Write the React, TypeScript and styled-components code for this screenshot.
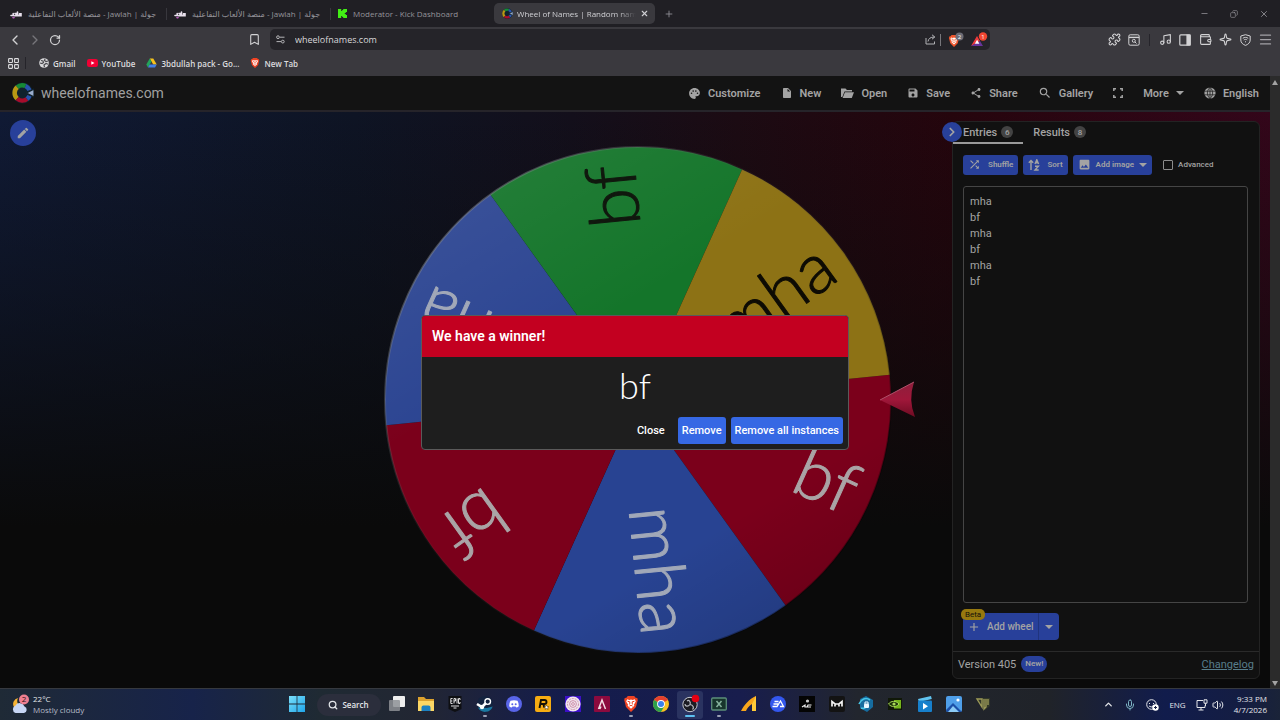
import React from "react";
import styled, { createGlobalStyle, css } from "styled-components";
import {
  Bookmark, ChevronLeft, ChevronRight, ChevronUp, RotateCw, Puzzle, Music, Wallet,
  Sparkle, Menu, X, Plus, Minus, Copy, Mic, Volume2, Search, LayoutGrid,
} from "lucide-react";
import {
  MdPalette, MdInsertDriveFile, MdSave, MdShare, MdSearch, MdEdit, MdShuffle, MdImage, MdAdd,
} from "react-icons/md";

const ui = `"Open Sans", "DejaVu Sans", sans-serif`;
const roboto = `Roboto, "Liberation Sans", sans-serif`;
const blue = "#28409a";
const dim = "#a3a3a3";

const GlobalStyle = createGlobalStyle`
  * { box-sizing: border-box; }
  body { margin: 0; background: #0a0a0a; overflow: hidden; }
  button, input, textarea { font: inherit; color: inherit; margin: 0; }
  button { border: 0; background: none; padding: 0; cursor: pointer; white-space: nowrap; }
  svg { display: block; flex: none; }
`;

const Desktop = styled.div`
  min-height: 100vh;
  display: flex;
  flex-direction: column;
  font-family: ${ui};
`;

/* ---------- browser chrome ---------- */

const TabStrip = styled.header`
  display: flex;
  align-items: center;
  height: 27px;
  padding-right: 8px;
  background: #201f24;
  color: #95949a;
  font-size: 8px;
`;

const Tab = styled.button<{ $active?: boolean }>`
  display: flex;
  align-items: center;
  gap: 6px;
  width: 164px;
  height: 21px;
  padding: 0 6px 0 10px;
  text-align: left;
  ${(p) =>
    p.$active
      ? css`
          width: 161px;
          margin: 0 4px 0 2px;
          padding-left: 8px;
          gap: 4px;
          border-radius: 5px;
          background: #3a393e;
          color: #d0d0d4;
        `
      : css`
          & + &::before { content: ""; width: 1px; height: 12px; margin-left: -8px; margin-right: 1px; background: #38373d; }
        `}
`;

const TabTitle = styled.span<{ $fade?: boolean }>`
  flex: 1;
  min-width: 0;
  white-space: nowrap;
  ${(p) => p.$fade && "mask-image: linear-gradient(90deg, #000 85%, transparent);"}
`;

const IconButton = styled.button`
  display: flex;
  align-items: center;
  justify-content: center;
  width: 20px;
  height: 20px;
`;

const WindowControls = styled.div`
  display: flex;
  gap: 10px;
  margin-left: auto;
  margin-right: -2px;
`;

const Toolbar = styled.div`
  display: flex;
  align-items: center;
  height: 25px;
  padding: 0 5px;
  background: #3a393e;
  color: #d2d2d4;
`;

const ToolGroup = styled.div`
  display: flex;
  align-items: center;
`;

const BookmarkSlot = styled.div`
  margin-left: 179px;
`;

const AddressBar = styled.form`
  display: flex;
  align-items: center;
  flex: 1;
  height: 21px;
  margin: 0 114px 0 6px;
  padding: 0 1px 0 6px;
  border-radius: 5px;
  background: #252429;
`;

const AddressInput = styled.input`
  flex: 1;
  min-width: 0;
  margin-left: 10px;
  padding: 0;
  border: 0;
  outline: 0;
  background: none;
  font-size: 9px;
  font-weight: 500;
  color: #d8d8da;
`;

const AddressBadges = styled.div`
  display: flex;
  gap: 4px;
`;

const Divider = styled.span<{ $light?: boolean }>`
  width: 1px;
  height: 12px;
  margin: 0 ${(p) => (p.$light ? "4px" : "5px")};
  background: ${(p) => (p.$light ? "#77767b" : "#25242a")};
`;

const Bookmarks = styled.nav`
  display: flex;
  align-items: center;
  height: 24px;
  padding: 0 7px 2px;
  background: #3a393e;
  color: #dcdcde;
  font-size: 8px;
  font-weight: 600;
`;

const BookmarkLinks = styled.div`
  display: flex;
  gap: 11px;
  margin-left: 8px;
`;

const BookmarkLink = styled.a`
  display: flex;
  align-items: center;
  gap: 4px;
  color: inherit;
  text-decoration: none;
  white-space: nowrap;
`;

/* ---------- web page ---------- */

const Viewport = styled.div`
  position: relative;
  display: flex;
  flex: 1;
  font-family: ${roboto};
  color: ${dim};
`;

const Page = styled.div`
  display: flex;
  flex: 1;
  flex-direction: column;
  min-width: 0;
`;

const Scrollbar = styled.div`
  display: flex;
  flex-direction: column;
  justify-content: space-between;
  align-items: center;
  width: 10px;
  padding: 4px 0 2px;
  background: #2b2b2b;
`;

const SiteHeader = styled.div`
  display: flex;
  align-items: center;
  height: 34px;
  padding: 0 11px 0 12px;
  background: #131313;
`;

const Brand = styled.a`
  display: flex;
  align-items: center;
  gap: 7px;
  margin-right: auto;
  color: #a0a0a0;
  font-size: 14px;
  text-decoration: none;
`;

const SiteMenu = styled.nav`
  display: flex;
  align-items: center;
  gap: 20px;
`;

const MenuItem = styled.button`
  display: flex;
  align-items: center;
  gap: 7px;
  font-size: 11px;
  font-weight: 600;
`;

const Main = styled.main`
  display: grid;
  flex: 1;
  grid-template-columns: minmax(0, 1fr) minmax(0, 560px) minmax(318px, 1fr);
  align-items: center;
  border-top: 2px solid #26242a;
  background:
    linear-gradient(180deg, transparent 0%, rgba(10, 10, 10, 0.45) 35%, #0a0a0a 72%),
    linear-gradient(90deg, #101a35 0%, #0e1424 28%, #130f1b 45%, #1c0b13 58%, #25050d 75%, #33061a 100%);
`;

const EditButton = styled.button`
  display: flex;
  align-items: center;
  justify-content: center;
  align-self: start;
  width: 26px;
  height: 26px;
  margin: 8px 0 0 10px;
  border-radius: 50%;
  background: ${blue};
`;

const WheelSvg = styled.svg`
  width: 100%;
  height: auto;
  font-family: Lato, "Liberation Sans", sans-serif;
  font-size: 70px;
  font-weight: 300;
`;

const Panel = styled.aside`
  position: relative;
  display: flex;
  flex-direction: column;
  align-self: stretch;
  justify-self: end;
  width: 308px;
  margin: 9px 10px 9px 0;
  border: 1px solid #232323;
  border-radius: 6px;
  background: #111111;
`;

const CollapseButton = styled.button`
  position: absolute;
  top: 0;
  left: -11px;
  display: flex;
  align-items: center;
  justify-content: center;
  width: 20px;
  height: 20px;
  border-radius: 50%;
  background: ${blue};
`;

const PanelTabs = styled.div`
  display: flex;
  height: 22px;
`;

const PanelTab = styled.button<{ $active?: boolean }>`
  display: flex;
  align-items: center;
  gap: 4px;
  padding: 0 10px;
  border-bottom: 2px solid ${(p) => (p.$active ? "#9a9a9a" : "transparent")};
  font-size: 11px;
  font-weight: 500;
`;

const Count = styled.span`
  display: flex;
  align-items: center;
  justify-content: center;
  width: 12px;
  height: 12px;
  border-radius: 50%;
  background: #434343;
  font-size: 8px;
`;

const PanelBody = styled.div`
  display: flex;
  flex: 1;
  flex-direction: column;
  padding: 10px 11px 11px 10px;
`;

const EntryTools = styled.div`
  display: flex;
  align-items: center;
  gap: 5px;
  height: 21px;
  margin-bottom: 11px;
`;

const ToolButton = styled.button`
  display: flex;
  align-items: center;
  gap: 5px;
  height: 20px;
  padding: 0 5px;
  border-radius: 3px;
  background: ${blue};
  font-size: 8px;
  font-weight: 600;
`;

const ToolLabel = styled.span<{ $inset?: boolean }>`
  padding-left: ${(p) => (p.$inset ? "2px" : "0")};
`;

const CheckLabel = styled.label`
  display: flex;
  align-items: center;
  gap: 5px;
  margin-left: 6px;
  font-size: 8px;
  font-weight: 500;
`;

const Checkbox = styled.input`
  appearance: none;
  width: 10px;
  height: 10px;
  border: 1px solid #8c8c8c;
  border-radius: 1px;
`;

const Entries = styled.textarea`
  flex: 1;
  width: 100%;
  padding: 7px 6px;
  border: 1px solid #454545;
  border-radius: 3px;
  outline: 0;
  background: #111111;
  font-size: 11px;
  line-height: 16px;
  resize: none;
`;

const AddWheelRow = styled.div`
  position: relative;
  display: flex;
  align-self: flex-start;
  height: 27px;
  margin-top: 10px;
  border-radius: 4px;
  background: ${blue};
`;

const AddWheelButton = styled.button`
  display: flex;
  align-items: center;
  gap: 6px;
  padding: 0 4px;
  font-size: 10px;
  font-weight: 500;
`;

const AddWheelMore = styled.button`
  display: flex;
  align-items: center;
  justify-content: center;
  width: 21px;
  border-left: 1px solid #20347e;
`;

const BetaBadge = styled.span`
  position: absolute;
  top: -4px;
  left: -2px;
  padding: 0 4px;
  border-radius: 5px;
  background: #97790f;
  color: #16130a;
  font-size: 8px;
  line-height: 11px;
`;

const PanelFooter = styled.footer`
  display: flex;
  align-items: center;
  gap: 5px;
  height: 27px;
  padding: 0 5px 2px;
  border-top: 1px solid #2a2a2a;
  font-size: 11px;
`;

const NewPill = styled.span`
  padding: 0 4px;
  border-radius: 8px;
  background: ${blue};
  font-size: 8px;
  font-weight: 600;
  line-height: 16px;
`;

const Changelog = styled.a`
  margin-left: auto;
  color: #587d8b;
`;

/* ---------- winner dialog ---------- */

const DialogLayer = styled.div`
  position: absolute;
  inset: 1px 10px 0 0;
  display: flex;
  align-items: center;
  justify-content: center;
`;

const Dialog = styled.section`
  width: 428px;
  border: 1px solid #5a5a5a;
  border-radius: 4px;
  overflow: hidden;
  background: #1e1e1e;
  color: #fff;
`;

const DialogTitle = styled.h2`
  margin: 0;
  padding: 0 10px;
  background: #c30020;
  font-size: 14px;
  font-weight: 600;
  line-height: 41px;
`;

const Winner = styled.p`
  margin: 0;
  padding-bottom: 4px;
  font-family: Lato, "Liberation Sans", sans-serif;
  font-size: 36px;
  font-weight: 300;
  line-height: 56px;
  text-align: center;
`;

const DialogActions = styled.div`
  display: flex;
  justify-content: flex-end;
  gap: 5px;
  padding: 0 5px 5px;
`;

const DialogButton = styled.button<{ $plain?: boolean }>`
  height: 27px;
  padding: 0 ${(p) => (p.$plain ? "8px" : "4px")};
  border-radius: 3px;
  background: ${(p) => (p.$plain ? "transparent" : "#3668e4")};
  font-size: 11px;
  font-weight: 500;
`;

/* ---------- taskbar ---------- */

const Taskbar = styled.footer`
  display: grid;
  grid-template-columns: 1fr auto 1fr;
  align-items: center;
  height: 32px;
  padding: 0 8px;
  border-top: 1px solid #36393f;
  background: linear-gradient(90deg, #1f2a36 0%, #17234a 15%, #1f2a33 25%, #222633 33%, #141c4c 44%, #181d4d 58%, #22262e 67%, #202329 82%, #111c4c 91%, #141d42 97%, #1a2338 100%);
  color: #e4e6ea;
  font-size: 8px;
`;

const Weather = styled.button`
  display: flex;
  align-items: center;
  gap: 4px;
  justify-self: start;
  padding: 0 0 2px 3px;
  line-height: 11px;
  text-align: left;
`;

const Muted = styled.span`
  color: #b4bac6;
`;

const TaskCenter = styled.div`
  display: flex;
  align-items: center;
`;

const SearchPill = styled.button`
  display: flex;
  align-items: center;
  justify-content: center;
  gap: 4px;
  width: 64px;
  height: 22px;
  margin: 0 3px 0 7px;
  border-radius: 11px;
  background: #2b2e3c;
  font-weight: 600;
`;

const TaskIcons = styled.div`
  display: flex;
  justify-content: space-between;
  width: 613px;
`;

const TaskButton = styled.button<{ $state?: "open" | "active" }>`
  display: flex;
  flex-direction: column;
  align-items: center;
  width: 26px;
  height: 28px;
  padding-top: 5px;
  border-radius: 3px;
  background: ${(p) => (p.$state === "active" ? "#2a3360" : "transparent")};
  &::after {
    content: "";
    width: ${(p) => (p.$state === "active" ? "10px" : "4px")};
    height: 2px;
    margin-top: 3px;
    border-radius: 1px;
    background: ${(p) => (p.$state === "active" ? "#5cc0f0" : p.$state ? "#9a9fb4" : "transparent")};
  }
`;

const Tray = styled.div`
  display: flex;
  align-items: center;
  justify-self: end;
  gap: 10px;
  padding-right: 5px;
`;

const TrayPair = styled.button`
  display: flex;
  gap: 4px;
`;

const Clock = styled.button`
  padding-bottom: 2px;
  line-height: 11px;
  text-align: right;
`;

/* ---------- drawings ---------- */

const WheelLogo = ({ size }: { size: number }) => (
  <svg width={size} height={size} viewBox="0 0 22 22" fill="none" strokeWidth="4.5">
    <circle cx="10.500" cy="11" r="10.500" fill="#10222d" />
    <path d="M5.200 5.200A7.600 7.600 0 0 1 13.500 4" stroke="#168a36" />
    <path d="M5.200 16.600A7.600 7.600 0 0 1 5.200 5.200" stroke="#b99713" />
    <path d="M15 17A7.600 7.600 0 0 1 5.200 16.600" stroke="#a80c2b" />
    <path d="M13.500 4A7.600 7.600 0 0 1 17.500 8.300M17.500 13.700A7.600 7.600 0 0 1 15 17" stroke="#2953ad" />
    <path d="M14.500 11 22 7v8z" fill="#9badcd" stroke="#10222d" strokeWidth="1.200" />
  </svg>
);

const JawlahIcon = () => (
  <svg width="12" height="10" viewBox="0 0 12 10" stroke="#e8e0ec" strokeWidth="1.600" fill="none" strokeLinecap="round">
    <path d="M1 6.500h2.200V4.600M4.500 6.800h1.600V4.400L5 4.600M7.500 3v3.800h1M9.200 6.600h1.800V4.700H9.600z" />
    <path d="M3 8.600h1" stroke="#b55bb7" />
  </svg>
);

const KickIcon = () => (
  <svg width="9" height="9" viewBox="0 0 9 9" fill="#42ee15">
    <path d="M0 0h3.200v2h1V1h1V0H9v3H7.800v1h-1v1h1v1H9v3H5.200V8h-1V7h-1v2H0z" />
  </svg>
);

const BraveIcon = ({ size, color = "#ef4323" }: { size: number; color?: string }) => (
  <svg width={size} height={size} viewBox="0 0 16 16">
    <path d="M4.800 0h6.400l1.400 1.700 1.700.3.500 2.200-.4 1.200-1.400 5.700L8 16l-5-4.900-1.400-5.700-.4-1.200.5-2.200 1.700-.3z" fill={color} />
    <path d="m4.200 3.200 2.200.7L8 3.400l1.600.5 2.200-.7 1 2.200-1.800 3 .3 1.400L8 12.700 4.700 9.800 5 8.400l-1.800-3z" fill="#fff" />
    <path d="m4.600 5.300 2.200.5v2l-.9.7M11.400 5.300l-2.200.5v2l.9.7M6.400 10.100 8 9.300l1.600.8" stroke={color} fill="none" />
  </svg>
);

const DriveIcon = () => (
  <svg width="11" height="10" viewBox="0 0 22 20">
    <path d="M7.500 1h7l7 12h-7z" fill="#f7c21c" />
    <path d="M7.500 1 11 7 4 19 .5 13z" fill="#23a35a" />
    <path d="M7.200 13h14.300L18 19H4z" fill="#4180e8" />
  </svg>
);

const YouTubeIcon = () => (
  <svg width="11" height="10" viewBox="0 0 11 10">
    <rect y="1" width="11" height="8" rx="2.200" fill="#f00034" />
    <path d="m4.300 3.200 3.200 1.800-3.200 1.800z" fill="#fff" />
  </svg>
);

const GlobeIcon = () => (
  <svg width="10" height="10" viewBox="0 0 10 10">
    <circle cx="5" cy="5" r="4.800" fill="#d8d8da" />
    <path d="M2 2.500 4 3l.5 1.500L3 5.500 1 5M6 .8 5.500 2.500 7 3.500 9 3M5.500 9 5 7l2-1.500 2 .8" stroke="#4a494e" fill="none" strokeWidth="1.200" />
  </svg>
);

const SiteInfoIcon = () => (
  <svg width="9" height="9" viewBox="0 0 9 9" fill="none" stroke="#b5b5b8">
    <circle cx="2" cy="2.200" r="1.400" /><path d="M4 2.200h4.500M.5 6.600H5" /><circle cx="6.800" cy="6.600" r="1.400" />
  </svg>
);

const ShareArrow = () => (
  <svg width="11" height="11" viewBox="0 0 11 11" fill="none" stroke="#b2b2b6">
    <path d="M1 4v6h8.500V7.500M3 7.500C3.500 4.500 5.500 3 9.500 3M7 .8 9.800 3 7 5.200" />
  </svg>
);

const ShieldBadge = () => (
  <svg width="19" height="16" viewBox="0 0 19 16">
    <g transform="translate(2 3)"><BraveIcon size={12} color="#f0552c" /></g>
    <circle cx="13.500" cy="4.500" r="4" fill="#6c6c76" />
    <text x="13.500" y="6.500" fontSize="6" fill="#fff" textAnchor="middle">2</text>
  </svg>
);

const RewardsBadge = () => (
  <svg width="19" height="16" viewBox="0 0 19 16">
    <path d="M1 14 7 4l3 5z" fill="#ee3a3d" />
    <path d="M1 14h12L10 9z" fill="#663399" />
    <path d="m4.800 11.800 2.300-4 2.300 4z" fill="#fff" />
    <circle cx="13" cy="4.500" r="4.200" fill="#f04632" />
    <text x="13" y="6.500" fontSize="6" fill="#fff" textAnchor="middle">1</text>
  </svg>
);

const TabSearchIcon = () => (
  <svg width="12" height="12" viewBox="0 0 12 12" fill="none" stroke="currentColor">
    <rect x=".8" y=".8" width="10.400" height="10.400" rx="1.400" /><path d="M1 3.400h10" strokeWidth="1.400" />
    <circle cx="5.800" cy="6.800" r="1.500" /><path d="m7 8 1.500 1.500" />
  </svg>
);

const SidebarIcon = () => (
  <svg width="12" height="12" viewBox="0 0 12 12" fill="none" stroke="currentColor" strokeWidth="1.200">
    <rect x=".8" y=".8" width="10.400" height="10.400" rx="1" /><path d="M8 1h3v10H8z" fill="currentColor" />
  </svg>
);

const VpnIcon = () => (
  <svg width="11" height="12" viewBox="0 0 11 12" fill="none" stroke="currentColor">
    <path d="M5.500.7 10.200 2v4c0 2.600-2 4.400-4.700 5.400C2.800 10.400.8 8.600.8 6V2z" />
    <path d="M2.800 4.300c1.700-1.200 3.700-1.200 5.400 0M3.800 6c1.100-.8 2.300-.8 3.400 0M5 7.800h1" />
  </svg>
);

const SortIcon = () => (
  <svg width="12" height="12" viewBox="0 0 12 12" fill="none" stroke="currentColor" strokeWidth="1.400">
    <path d="M3 11V1.500M.8 3.800 3 1.500l2.200 2.300M7 5 8.800.8 10.600 5M7.600 3.700H10M7 7.200h3.400L7 11h3.700" />
  </svg>
);

const NetworkIcon = () => (
  <svg width="12" height="12" viewBox="0 0 12 12" fill="none" stroke="currentColor">
    <path d="M7 1.500H1v7h8V6.500M5 8.500V11M2.500 11h5M8 .8h3v3.400H8zM9.500 4.200V7" />
  </svg>
);

const Triangle = ({ up, w = 8 }: { up?: boolean; w?: number }) => (
  <svg width={w} height={w === 8 ? 4 : 5} viewBox="0 0 8 5" fill="currentColor" preserveAspectRatio="none">
    <path d={up ? "M0 5 4 0l4 5z" : "M0 0h8L4 5z"} />
  </svg>
);

const R = 253;
const START = -5.7;
const slices = [
  { label: "bf", color: "#7b001b", ink: "#aaa4a6" },
  { label: "mha", color: "#284392", ink: "#a1a8b8" },
  { label: "bf", color: "#7b001b", ink: "#aaa4a6" },
  { label: "mha", color: "#2c4592", ink: "#a1a8b8" },
  { label: "bf", color: "#14752a", ink: "#10180e" },
  { label: "mha", color: "#8d7215", ink: "#0d0b04" },
];

const rim = (deg: number) => {
  const a = (deg * Math.PI) / 180;
  return `${(R * Math.cos(a)).toFixed(2)} ${(R * Math.sin(a)).toFixed(2)}`;
};

const Wheel = () => (
  <WheelSvg viewBox="-283 -280 560 560" role="img" aria-label="Wheel with six entries">
    <defs>
      <linearGradient id="light" x1="0.1" y1="0" x2="0.7" y2="1">
        <stop offset="0" stopColor="#fff" stopOpacity="0.08" />
        <stop offset="0.4" stopColor="#fff" stopOpacity="0" />
        <stop offset="0.8" stopColor="#000" stopOpacity="0" />
        <stop offset="1" stopColor="#000" stopOpacity="0.12" />
      </linearGradient>
      <linearGradient id="edge" x1="0" y1="0.1" x2="0.8" y2="0.8">
        <stop offset="0" stopColor="#9aa0a8" stopOpacity="0.6" />
        <stop offset="0.5" stopColor="#555" stopOpacity="0.1" />
        <stop offset="1" stopColor="#000" stopOpacity="0.3" />
      </linearGradient>
      <linearGradient id="pointer" x1="0" y1="0" x2="0" y2="1">
        <stop offset="0" stopColor="#8e1f3c" />
        <stop offset="0.5" stopColor="#a0173a" />
        <stop offset="1" stopColor="#6e0b22" />
      </linearGradient>
    </defs>
    {slices.map((s, i) => {
      const a = START + i * 60;
      return <path key={i} d={`M0 0 L${rim(a)} A${R} ${R} 0 0 1 ${rim(a + 60)}Z`} fill={s.color} />;
    })}
    <circle r={R} fill="url(#light)" stroke="url(#edge)" strokeWidth="2" />
    {slices.map((s, i) => (
      <text
        key={i} x="236" y="20" textAnchor="end" fill={s.ink}
        stroke={s.ink} strokeWidth="1" strokeLinejoin="round"
        transform={`rotate(${START + 30 + i * 60})`}
      >
        {s.label}
      </text>
    ))}
    <path d="M242 0 276-18Q270 0 277 17Z" fill="url(#pointer)" />
    <path d="M242 0 276-18" stroke="#b0506a" />
  </WheelSvg>
);

const WeatherIcon = () => (
  <svg width="18" height="20" viewBox="0 0 18 20">
    <path d="M7 4a6 6 0 0 0 5 9H3a6 6 0 0 1 4-9z" fill="#f5b334" />
    <path d="M4.500 19a4 4 0 0 1 0-7.500 5 5 0 0 1 9 1 3.400 3.400 0 0 1-.5 6.500z" fill="#c7d6f5" />
    <circle cx="13" cy="5.500" r="5" fill="#ee7f91" />
    <text x="13" y="8.400" fontSize="8" fill="#2a1016" textAnchor="middle">2</text>
  </svg>
);

const WindowsIcon = () => (
  <svg width="16" height="16" viewBox="0 0 16 16">
    <defs>
      <linearGradient id="win" x1="0" y1="0" x2="1" y2="1"><stop stopColor="#7be0fb" /><stop offset="1" stopColor="#1fa5ea" /></linearGradient>
    </defs>
    <path d="M0 0h7.600v7.600H0zM8.400 0H16v7.600H8.400zM0 8.400h7.600V16H0zM8.400 8.400H16V16H8.400z" fill="url(#win)" />
  </svg>
);

type TaskApp = { name: string; state?: "open" | "active"; art: React.ReactNode };

const apps: TaskApp[] = [
  { name: "Task view", art: <><rect x="4" width="12" height="11" rx="1" fill="#eee" /><rect y="4" width="11" height="11" rx="1" fill="#8d9095" opacity=".85" /></> },
  { name: "File Explorer", art: <><path d="M0 1h6l2 2h8v12H0z" fill="#dca22e" /><path d="M0 5h16v10H0z" fill="#fcd765" /><path d="M3.500 15v-3.500a2 2 0 0 1 2-2h5a2 2 0 0 1 2 2V15z" fill="#1c81c2" /></> },
  { name: "Epic Games", art: <><path d="M1.500 0h13v13L8 16l-6.500-3z" fill="#0e0f12" /><path d="M3.800 2.500H5.600M3.800 2.500v5h1.800M3.800 5h1.500M7 7.500v-5h1.500v2.500H7M10 2.500v5M13 4V2.500h-1.500v5H13V6M4 10h8M6.500 12h3" stroke="#ddd" fill="none" /></> },
  { name: "Steam", state: "open", art: <><circle cx="8" cy="8" r="8" fill="#14233f" /><path d="M1 11.500a8 8 0 0 0 14.700-1L10 12z" fill="#1b78a0" /><path d="m0 8 5 3 5-5" stroke="#fff" strokeWidth="2.600" fill="none" /><circle cx="10.700" cy="5.600" r="2.800" fill="#14233f" stroke="#fff" strokeWidth="1.400" /><circle cx="5" cy="11" r="2.200" fill="#fff" /></> },
  { name: "Discord", art: <><circle cx="8" cy="8" r="8" fill="#5965e8" /><path d="M4.500 4.800Q8 3.500 11.500 4.800q1.500 2.500 1.300 5.500Q11.500 11.500 10.300 11.500l-.8-1h-3l-.8 1Q4.500 11.500 3.200 10.300 3 7.300 4.500 4.800z" fill="#fff" /><circle cx="6.300" cy="8.200" r="1" fill="#5965e8" /><circle cx="9.700" cy="8.200" r="1" fill="#5965e8" /></> },
  { name: "Rockstar Games", art: <><rect width="16" height="16" rx="2" fill="#f6ac12" /><path d="M4.500 12 6 4h3.500a1.800 1.800 0 0 1 0 4H5.500M8.500 8l.7 3.500" stroke="#141005" strokeWidth="1.900" fill="none" /><path d="m11.500 9 .7 1.500 1.800.1-1.400 1.200.5 1.700-1.600-1-1.500 1 .5-1.700L9 10.600l1.700-.1z" fill="#fff" stroke="#141005" strokeWidth=".4" /></> },
  { name: "Spiral", art: <><rect width="16" height="16" fill="#3c0fc8" /><circle cx="8" cy="8" r="7.600" fill="#efe6ee" /><g fill="none" stroke="#c87a9a" strokeWidth=".8"><circle cx="8" cy="8" r="5.500" strokeDasharray="2 1" /><circle cx="8" cy="8" r="3.400" /><circle cx="8" cy="8" r="1.400" /></g></> },
  { name: "Recorder", art: <><rect width="16" height="16" rx="1" fill="#8c0a3e" /><path d="m4.500 13 3.500-9 3.500 9M7 10.500l-1.200 2.500" stroke="#f2dce4" strokeWidth="1.500" fill="none" /></> },
  { name: "Brave", state: "open", art: <BraveIcon size={16} /> },
  { name: "Chrome", art: <><circle cx="8" cy="8" r="8" fill="#fac022" /><path d="M8 8 1.100 4A8 8 0 0 1 14.900 4z" fill="#e5402f" /><path d="M8 8 1.100 4A8 8 0 0 0 8 16l3.500-6z" fill="#2da04c" /><circle cx="8" cy="8" r="3.900" fill="#fff" /><circle cx="8" cy="8" r="3" fill="#3b80ec" /></> },
  { name: "OBS Studio", state: "active", art: <><circle cx="8" cy="8.500" r="7.200" fill="#1b1b22" stroke="#c6c8cf" /><path d="M8 8.500C9 5.500 7 3.500 5 5M8 8.500c3 .5 4.500 3 2.500 5M8 8.500c-2 2.500-5 2-5-.5" stroke="#b8bac2" strokeWidth="1.200" fill="none" /><circle cx="13.500" cy="2.500" r="3.800" fill="#e60012" /></> },
  { name: "Game overlay", state: "open", art: <><rect x=".7" y="2" width="14.600" height="12" rx="1" fill="#17352c" stroke="#5c8e79" strokeWidth="1.300" /><path d="m5.500 5 5 6M10.500 5l-5 6" stroke="#86b39d" strokeWidth="1.500" /></> },
  { name: "Launcher", art: <><path d="M0 15C3 9 8 3 15 0v15h-4V8C8 10 6 12 5 15z" fill="#f7a51b" /><path d="M11 8v7h4V0z" fill="#ffcb3a" /></> },
  { name: "EA", art: <><circle cx="8" cy="8" r="8" fill="#3357ee" /><path d="M4.500 5.500h4M3.500 8H8M2.500 10.500h4.500L10.500 5l3 5.500H10" stroke="#fff" strokeWidth="1.300" fill="none" /></> },
  { name: "Racing", art: <><rect width="16" height="16" fill="#040404" /><circle cx="8.500" cy="5" r="1.600" fill="#ccc" /><path d="m3 11 3-2v2h2l1-2h3.500M8 11h4" stroke="#eee" strokeWidth="1.200" fill="none" /></> },
  { name: "Mod manager", art: <><rect width="16" height="16" rx="2" fill="#131313" /><path d="M3 10.500v-5l3 2.500h4l3-2.500v5M6 8v2.500M10 8v2.500" stroke="#f4f4f4" strokeWidth="1.700" fill="none" /></> },
  { name: "VPN", art: <><path d="M2 3 8 0l7 4v7l-6 5-7-4z" fill="#166c9f" /><path d="M1 8c2-5 7-7 11-4M3 12c2 1 5 0 6-2" stroke="#47c4e4" strokeWidth="1.600" fill="none" /><rect x="6" y="7.500" width="5" height="4.500" rx="1" fill="#e7f6ff" /><path d="M7 8V6h3v2" stroke="#e7f6ff" fill="none" /></> },
  { name: "NVIDIA", art: <><rect x="1" y="2" width="14" height="12" fill="#101808" /><path d="M7 4h7v8.500H7z" fill="#75b51c" /><path d="M1.500 8C4 4.500 9 4.500 12 8c-3 3.500-7.500 3.500-10.500 0z" fill="#1c300a" stroke="#a7d957" /><circle cx="7" cy="8" r="1.600" fill="#a7d957" /></> },
  { name: "Movies & TV", art: <><path d="m1 3 13-3 .8 3L2 6z" fill="#61c4f0" /><rect x="1" y="4.500" width="14" height="11.500" rx="1" fill="#1780cc" /><path d="m6 7 5 3.200-5 3.200z" fill="#fff" /></> },
  { name: "Photos", art: <><rect width="16" height="16" rx="2" fill="#4f9fe9" /><path d="m0 14 7-7 9 9H2a2 2 0 0 1-2-2z" fill="#1b50a8" /><path d="m2 16 5-6 6 6z" fill="#8ccbf5" /><circle cx="12" cy="4" r="1.600" fill="#fff" /></> },
  { name: "Overlay", art: <><path d="M1 2h14v8l-5 4z" fill="#424a26" opacity=".5" /><path d="M2 3h5v8zM9 3v10l2-2V3M13 3v6" stroke="#9a9857" strokeWidth="1.400" fill="none" /></> },
];

const menu: { label?: string; icon?: React.ReactNode; caret?: boolean }[] = [
  { label: "Customize", icon: <MdPalette size={13} /> },
  { label: "New", icon: <MdInsertDriveFile size={12} /> },
  { label: "Open", icon: <svg width="13" height="12" viewBox="0 0 13 12" fill="currentColor"><path d="M0 10V1.500h4.500L6 3h5v1.500H3.500L1.300 10z" /><path d="M3.900 5.300H13L10.800 11H1.600z" /></svg> },
  { label: "Save", icon: <MdSave size={12} /> },
  { label: "Share", icon: <MdShare size={12} /> },
  { label: "Gallery", icon: <MdSearch size={14} /> },
  { icon: <svg width="10" height="10" viewBox="0 0 10 10" fill="none" stroke="currentColor" strokeWidth="1.500"><path d="M.8 3V.8H3M7 .8h2.200V3M9.200 7v2.200H7M3 9.200H.8V7" /></svg> },
  { label: "More", caret: true },
  { label: "English", icon: <svg width="12" height="12" viewBox="0 0 12 12"><circle cx="6" cy="6" r="5.600" fill="currentColor" /><path d="M.5 4.200h11M.5 7.800h11M6 0v12M6 .5C2.500 3.500 2.500 8.500 6 11.500M6 .5c3.500 3 3.500 8 0 11" stroke="#131313" strokeWidth=".7" fill="none" /></svg> },
];

/* ---------- sections ---------- */

const Browser = () => (
  <>
    <TabStrip>
      {[0, 1].map((n) => (
        <Tab key={n}>
          <JawlahIcon />
          <TabTitle dir="rtl">جولة | Jawlah - منصة الألعاب التفاعلية</TabTitle>
        </Tab>
      ))}
      <Tab><KickIcon /><TabTitle>Moderator - Kick Dashboard</TabTitle></Tab>
      <Tab $active>
        <WheelLogo size={11} />
        <TabTitle $fade>Wheel of Names | Random nam</TabTitle>
        <X size={9} strokeWidth={3} />
      </Tab>
      <IconButton aria-label="New tab"><Plus size={10} /></IconButton>
      <WindowControls>
        <IconButton aria-label="Minimize"><Minus size={9} /></IconButton>
        <IconButton aria-label="Restore"><Copy size={8} transform="scale(-1 1)" /></IconButton>
        <IconButton aria-label="Close window"><X size={10} /></IconButton>
      </WindowControls>
    </TabStrip>
    <Toolbar>
      <ToolGroup>
        <IconButton aria-label="Back"><ChevronLeft size={16} /></IconButton>
        <IconButton aria-label="Forward"><ChevronRight size={16} color="#77767b" /></IconButton>
        <IconButton aria-label="Reload"><RotateCw size={12} strokeWidth={2.5} /></IconButton>
      </ToolGroup>
      <BookmarkSlot><IconButton aria-label="Bookmark this page"><Bookmark size={13} /></IconButton></BookmarkSlot>
      <AddressBar>
        <SiteInfoIcon />
        <AddressInput aria-label="Address" defaultValue="wheelofnames.com" />
        <ShareArrow />
        <Divider $light />
        <AddressBadges>
          <IconButton type="button" aria-label="Shields"><ShieldBadge /></IconButton>
          <IconButton type="button" aria-label="Rewards"><RewardsBadge /></IconButton>
        </AddressBadges>
      </AddressBar>
      <ToolGroup>
        <IconButton aria-label="Extensions"><Puzzle size={13} /></IconButton>
        <IconButton aria-label="Search tabs"><TabSearchIcon /></IconButton>
        <Divider />
        <IconButton aria-label="Playlist"><Music size={13} /></IconButton>
        <IconButton aria-label="Sidebar"><SidebarIcon /></IconButton>
        <IconButton aria-label="Wallet"><Wallet size={13} /></IconButton>
        <IconButton aria-label="Leo"><Sparkle size={13} /></IconButton>
        <IconButton aria-label="VPN"><VpnIcon /></IconButton>
        <IconButton aria-label="Menu"><Menu size={15} color="#a2a1a6" /></IconButton>
      </ToolGroup>
    </Toolbar>
    <Bookmarks>
      <LayoutGrid size={13} />
      <Divider />
      <BookmarkLinks>
        <BookmarkLink href="#gmail"><GlobeIcon />Gmail</BookmarkLink>
        <BookmarkLink href="#youtube"><YouTubeIcon />YouTube</BookmarkLink>
        <BookmarkLink href="#drive"><DriveIcon />3bdullah pack - Go...</BookmarkLink>
        <BookmarkLink href="#newtab"><BraveIcon size={10} />New Tab</BookmarkLink>
      </BookmarkLinks>
    </Bookmarks>
  </>
);

const EntriesPanel = () => (
  <Panel>
    <PanelTabs>
      <PanelTab $active>Entries <Count>6</Count></PanelTab>
      <PanelTab>Results <Count>8</Count></PanelTab>
    </PanelTabs>
    <CollapseButton aria-label="Collapse panel"><ChevronRight size={14} strokeWidth={3} /></CollapseButton>
    <PanelBody>
      <EntryTools>
        <ToolButton><MdShuffle size={13} /><ToolLabel $inset>Shuffle</ToolLabel></ToolButton>
        <ToolButton><SortIcon /><ToolLabel $inset>Sort</ToolLabel></ToolButton>
        <ToolButton><MdImage size={13} /><ToolLabel>Add image</ToolLabel><Triangle /></ToolButton>
        <CheckLabel><Checkbox type="checkbox" />Advanced</CheckLabel>
      </EntryTools>
      <Entries aria-label="Entries" defaultValue={"mha\nbf\nmha\nbf\nmha\nbf"} />
      <AddWheelRow>
        <AddWheelButton><MdAdd size={14} />Add wheel</AddWheelButton>
        <AddWheelMore aria-label="More wheel options"><Triangle /></AddWheelMore>
        <BetaBadge>Beta</BetaBadge>
      </AddWheelRow>
    </PanelBody>
    <PanelFooter>
      Version 405 <NewPill>New!</NewPill>
      <Changelog href="#changelog">Changelog</Changelog>
    </PanelFooter>
  </Panel>
);

const WinnerDialog = () => (
  <DialogLayer>
    <Dialog role="dialog" aria-labelledby="winner-title">
      <DialogTitle id="winner-title">We have a winner!</DialogTitle>
      <Winner>bf</Winner>
      <DialogActions>
        <DialogButton $plain>Close</DialogButton>
        <DialogButton>Remove</DialogButton>
        <DialogButton>Remove all instances</DialogButton>
      </DialogActions>
    </Dialog>
  </DialogLayer>
);

const WindowsTaskbar = () => (
  <Taskbar>
    <Weather>
      <WeatherIcon />
      <span>22°C<br /><Muted>Mostly cloudy</Muted></span>
    </Weather>
    <TaskCenter>
      <TaskButton aria-label="Start"><WindowsIcon /></TaskButton>
      <SearchPill><Search size={10} strokeWidth={3} />Search</SearchPill>
      <TaskIcons>
        {apps.map((a) => (
          <TaskButton key={a.name} aria-label={a.name} $state={a.state}>
            <svg width="16" height="16" viewBox="0 0 16 16" overflow="visible">{a.art}</svg>
          </TaskButton>
        ))}
      </TaskIcons>
    </TaskCenter>
    <Tray>
      <ChevronUp size={11} strokeWidth={3} />
      <Mic size={12} color="#7db4c4" />
      <svg width="13" height="12" viewBox="0 0 13 12" fill="none" stroke="#e4e6ea">
        <circle cx="5.500" cy="5.500" r="4.800" /><path d="M3.500 4v1M7.500 4v1M3 7q2.500 2 4 0" />
        <circle cx="9.500" cy="8.500" r="3.200" fill="#fff" stroke="none" /><path d="M9.500 7v3M8 8.500h3" stroke="#1a2244" />
      </svg>
      <span>ENG</span>
      <TrayPair aria-label="Network and volume"><NetworkIcon /><Volume2 size={12} /></TrayPair>
      <Clock>9:33 PM<br />4/7/2026</Clock>
    </Tray>
  </Taskbar>
);

export default function App() {
  return (
    <Desktop>
      <GlobalStyle />
      <Browser />
      <Viewport>
        <Page>
          <SiteHeader>
            <Brand href="#home"><WheelLogo size={22} />wheelofnames.com</Brand>
            <SiteMenu>
              {menu.map((m, i) => (
                <MenuItem key={i} aria-label={m.label ?? "Fullscreen"}>
                  {m.icon}{m.label}{m.caret && <Triangle />}
                </MenuItem>
              ))}
            </SiteMenu>
          </SiteHeader>
          <Main>
            <EditButton aria-label="Edit title"><MdEdit size={14} /></EditButton>
            <Wheel />
            <EntriesPanel />
          </Main>
        </Page>
        <Scrollbar><Triangle up w={6} /><Triangle w={6} /></Scrollbar>
        <WinnerDialog />
      </Viewport>
      <WindowsTaskbar />
    </Desktop>
  );
}
